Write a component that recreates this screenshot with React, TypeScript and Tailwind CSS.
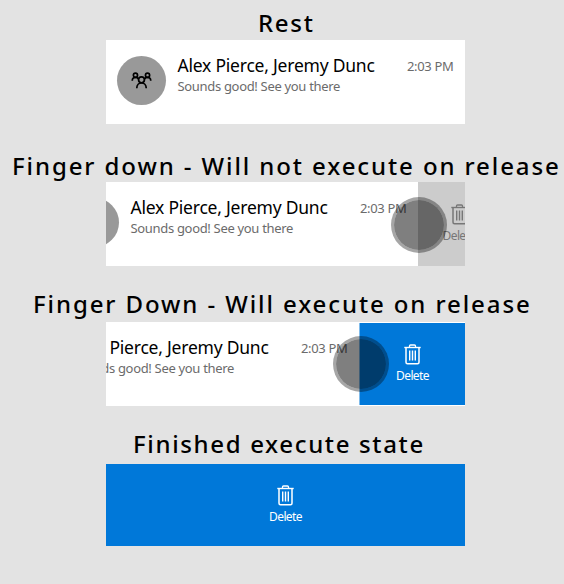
import React from "react";

function TrashIcon({ className = "" }: { className?: string }) {
  return (
    <svg width="17" height="21" viewBox="0 0 17 21" fill="none" stroke="currentColor" className={`block shrink-0 ${className}`}>
      <path d="M0.3 3.5H16.7" strokeWidth="1.4" />
      <path d="M5.5 3.5V2Q5.5 1 6.5 1H10.5Q11.5 1 11.5 2V3.5" strokeWidth="1.3" />
      <path d="M2 4V18.2Q2 19.7 3.5 19.7H13.5Q15 19.7 15 18.2V4" strokeWidth="1.5" />
      <path d="M5.7 6.5V16.5M8.5 6.5V16.5M11.3 6.5V16.5" strokeWidth="1.4" />
    </svg>
  );
}

function PeopleIcon() {
  return (
    <svg width="21" height="17" viewBox="0 0 22 18" fill="none" stroke="#000" strokeWidth="1.8" className="block">
      <circle cx="4.6" cy="3.4" r="2.2" />
      <circle cx="17.4" cy="3.4" r="2.2" />
      <circle cx="11" cy="8.3" r="3.1" />
      <path d="M1.2 9.2C1.2 6.9 2.8 5.7 4.6 5.7C6 5.7 7.2 6.3 7.8 7.4" />
      <path d="M20.8 9.2C20.8 6.9 19.2 5.7 17.4 5.7C16 5.7 14.8 6.3 14.2 7.4" />
      <path d="M6 17.2C6 13.6 8.3 11.6 11 11.6C13.7 11.6 16 13.6 16 17.2" />
    </svg>
  );
}

function Heading({ className, children }: { className: string; children: React.ReactNode }) {
  return (
    <h2 className={`shrink-0 whitespace-nowrap text-[24px] leading-[32px] font-medium text-black ${className}`}>
      {children}
    </h2>
  );
}

function Message({ className = "" }: { className?: string }) {
  return (
    <div className={`flex h-full w-[359px] shrink-0 ${className}`}>
      <div className="mt-4 ml-[11px] flex size-[49px] shrink-0 items-center justify-center rounded-full bg-[#999]">
        <PeopleIcon />
      </div>
      <div className="mt-[13px] ml-[11.5px] w-[229px] shrink-0 whitespace-nowrap">
        <div className="text-[17.5px] leading-6 tracking-[-0.22px] text-black">Alex Pierce, Jeremy Dunc</div>
        <div className="text-[13px] leading-[19px] tracking-[-0.32px] text-[#6b6b6b]">Sounds good! See you there</div>
      </div>
      <div className="mt-[16px] ml-[0.5px] text-[13px] leading-[20px] whitespace-nowrap tracking-[-0.35px] text-[#6b6b6b]">2:03 PM</div>
    </div>
  );
}

function DeleteAction({ className }: { className: string }) {
  return (
    <div className={`flex shrink-0 flex-col items-center ${className}`}>
      <TrashIcon />
      <span className="mt-[3px] text-[12px] leading-4 tracking-[-0.6px]">Delete</span>
    </div>
  );
}

function Touch({ className }: { className: string }) {
  return <div className={`absolute size-[56px] rounded-full border-[3px] border-black/35 bg-black/50 bg-clip-padding ${className}`} />;
}

const card = "relative ml-[106px] flex h-[84px] w-[359px] shrink-0 overflow-hidden bg-white";

export default function App() {
  return (
    <main className="flex h-[584px] w-[564px] flex-col overflow-hidden bg-[#e3e3e3] font-['Noto_Sans','Open_Sans',sans-serif]">
      <Heading className="mt-[7px] mb-px pl-[258px] tracking-[1.7px]">Rest</Heading>
      <section className={card}>
        <Message />
      </section>

      <Heading className="mt-[26px] pl-[12px] tracking-[1.9px]">Finger down - Will not execute on release</Heading>
      <section className={card}>
        <Message className="ml-[-47px]" />
        <div className="h-full w-[47px] shrink-0 overflow-hidden bg-[#ccc] pt-[22px] pl-[24px] text-[#777]">
          <DeleteAction className="w-[34px]" />
        </div>
        <Touch className="top-[15px] left-[285px]" />
      </section>

      <Heading className="mt-[22px] mb-[2px] pl-[33px] tracking-[1.9px]">Finger Down - Will execute on release</Heading>
      <section className={card}>
        <Message className="ml-[-106px]" />
        <div className="mt-px flex h-[82px] w-[106px] shrink-0 justify-center border-l border-[#7fbbeb] bg-[#0078d9] pt-[21px] text-white">
          <DeleteAction className="w-[40px]" />
        </div>
        <Touch className="top-[14px] left-[227px]" />
      </section>

      <Heading className="mt-[22px] mb-[4px] pl-[133px] tracking-[1.65px]">Finished execute state</Heading>
      <section className="ml-[106px] flex h-[82px] w-[359px] shrink-0 justify-center bg-[#0078d9] pt-[21px] text-white">
        <DeleteAction className="w-[40px]" />
      </section>
    </main>
  );
}
